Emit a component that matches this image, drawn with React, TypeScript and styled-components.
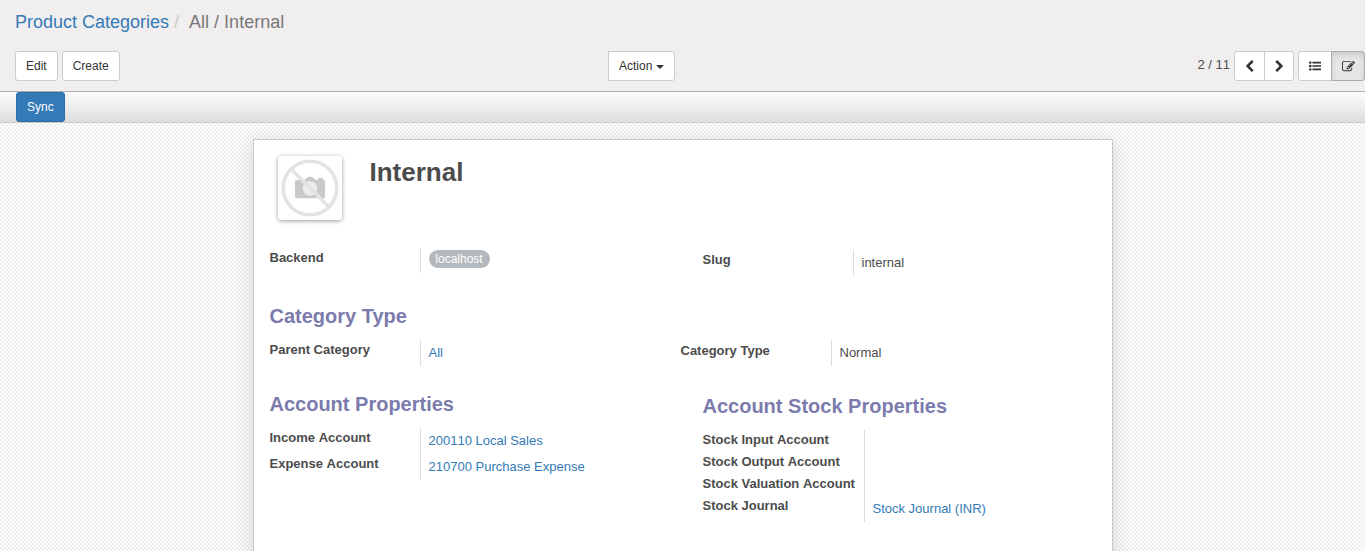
import React from 'react';
import styled, { createGlobalStyle, css } from 'styled-components';

const GlobalStyle = createGlobalStyle`
  *, *::before, *::after { box-sizing: border-box; }
  html, body { margin: 0; height: 100%; overflow: hidden; }
  body {
    font-family: "Liberation Sans", Arial, sans-serif;
    font-size: 13px;
    line-height: 18px;
    color: #4c4c4c;
    background: #fff;
  }
  button { font-family: inherit; margin: 0; }
`;

const Page = styled.div`
  display: flex;
  flex-direction: column;
  height: 551px;
  overflow: hidden;
`;

const ControlPanel = styled.header`
  flex: none;
  height: 92px;
  background: #f0eeee;
  border-bottom: 1px solid #afafb6;
  padding: 9px 0 0 15px;
`;

const Breadcrumb = styled.nav`
  display: flex;
  height: 42px;
  font-size: 18px;
  line-height: 26px;
  color: #777;
  white-space: pre;
`;

const Crumb = styled.a`
  color: #337ab7;
`;

const Separator = styled.span`
  color: #ccc;
  padding: 0 10px 0 5px;
`;

const Toolbar = styled.div`
  display: grid;
  grid-template-columns: 593px 1fr auto;
  align-items: start;
`;

const ButtonRow = styled.div`
  display: flex;
  gap: 4px;
`;

const Button = styled.button<{ $primary?: boolean; $squareLeft?: boolean }>`
  display: inline-flex;
  align-items: center;
  height: 30px;
  padding: 0 10px;
  font-size: 12px;
  line-height: 18px;
  color: ${p => (p.$primary ? '#fff' : '#333')};
  background: ${p => (p.$primary ? '#337ab7' : '#fff')};
  border: 1px solid ${p => (p.$primary ? '#2e6da4' : '#ccc')};
  border-radius: ${p => (p.$squareLeft ? '0 3px 3px 0' : '3px')};
`;

const Caret = styled.span`
  margin: 2px 0 0 4px;
  border-top: 4px solid #333;
  border-left: 4px solid transparent;
  border-right: 4px solid transparent;
`;

const PagerArea = styled.div`
  display: flex;
  gap: 4px;
`;

const PagerText = styled.span`
  line-height: 28px;
  font-kerning: none;
`;

const ButtonGroup = styled.div`
  display: flex;
`;

const IconButton = styled.button<{ $width: number; $active?: boolean }>`
  display: flex;
  align-items: center;
  justify-content: center;
  width: ${p => p.$width}px;
  height: 30px;
  padding: 0;
  color: #333;
  background: #fff;
  border: 1px solid #ccc;
  &:first-child { border-radius: 3px 0 0 3px; }
  &:last-child { border-radius: 0 3px 3px 0; margin-left: -1px; }
  ${p => p.$active && css`
    background: #e6e6e6;
    border-color: #adadad;
    box-shadow: inset 0 3px 5px rgba(0, 0, 0, 0.125);
  `}
`;

const StatusBar = styled.div`
  flex: none;
  height: 31px;
  padding-left: 16px;
  border-bottom: 1px solid #cacaca;
  background: linear-gradient(to bottom, #fcfcfc, #dedede);
`;

const Canvas = styled.main`
  flex: 1;
  padding-top: 16px;
  background: repeating-conic-gradient(#fff 0 25%, #eee 0 50%) 0 0 / 4px 4px;
`;

const Sheet = styled.section`
  width: 860px;
  height: 500px;
  margin-left: 253px;
  padding: 16px 15.5px;
  background: #fff;
  border: 1px solid #c8c8d3;
  box-shadow: 0 4px 20px rgba(0, 0, 0, 0.15);
`;

const SheetHeader = styled.div`
  display: flex;
  gap: 27.5px;
  height: 92px;
  padding-left: 8.5px;
`;

const Avatar = styled.div`
  width: 64px;
  height: 64px;
  border-radius: 3px;
  background: #fff;
  box-shadow: 0 1px 4px rgba(0, 0, 0, 0.4);
`;

const Title = styled.h1`
  margin: 0;
  font-size: 26px;
  line-height: 32px;
`;

const Section = styled.div<{ $height: number; $split?: number }>`
  display: grid;
  grid-template-columns: ${p => p.$split ?? 433}px 1fr;
  align-items: start;
  height: ${p => p.$height}px;
`;

const Column = styled.div<{ $offset?: number }>`
  padding-top: ${p => p.$offset ?? 0}px;
`;

const Heading = styled.h2`
  margin: 0;
  height: 36px;
  font-size: 20px;
  line-height: 24px;
  color: #7c7bad;
`;

const Field = styled.div<{ $label?: number; $height?: number }>`
  display: grid;
  grid-template-columns: ${p => p.$label ?? 150}px 1fr;
  height: ${p => p.$height ?? 26}px;
`;

const Label = styled.label<{ $shift?: number }>`
  font-weight: bold;
  white-space: nowrap;
  padding-top: ${p => p.$shift ?? 1}px;
`;

const Value = styled.div<{ $link?: boolean; $top?: number }>`
  padding: ${p => p.$top ?? 4}px 0 0 8px;
  border-left: 1px solid #ddd;
  color: ${p => (p.$link ? '#337ab7' : 'inherit')};
`;

const Unkerned = styled.span`
  font-kerning: none;
`;

const Tag = styled.span`
  display: block;
  width: 61px;
  height: 18px;
  border-radius: 9px;
  background: #b4b9bd;
  color: #fff;
  font-size: 12px;
  line-height: 18px;
  text-align: center;
`;

const ICONS = {
  left: 'M1427 301l-531 531 531 531q19 19 19 45t-19 45l-166 166q-19 19-45 19t-45-19l-742-742q-19-19-19-45t19-45l742-742q19-19 45-19t45 19l166 166q19 19 19 45t-19 45z',
  right: 'M1363 877l-742 742q-19 19-45 19t-45-19l-166-166q-19-19-19-45t19-45l531-531-531-531q-19-19-19-45t19-45l166-166q19-19 45-19t45 19l742 742q19 19 19 45t-19 45z',
  list: 'M384 1408q0 80-56 136t-136 56-136-56-56-136 56-136 136-56 136 56 56 136zm0-512q0 80-56 136t-136 56-136-56-56-136 56-136 136-56 136 56 56 136zm1408 416v192q0 13-9.500 22.500t-22.500 9.500h-1216q-13 0-22.500-9.500t-9.500-22.500v-192q0-13 9.500-22.500t22.500-9.500h1216q13 0 22.500 9.500t9.500 22.500zm-1408-928q0 80-56 136t-136 56-136-56-56-136 56-136 136-56 136 56 56 136zm1408 416v192q0 13-9.500 22.500t-22.500 9.500h-1216q-13 0-22.500-9.500t-9.500-22.500v-192q0-13 9.500-22.500t22.500-9.500h1216q13 0 22.500 9.500t9.500 22.500zm0-512v192q0 13-9.500 22.500t-22.500 9.500h-1216q-13 0-22.500-9.500t-9.500-22.500v-192q0-13 9.500-22.500t22.500-9.500h1216q13 0 22.500 9.500t9.500 22.500z',
  edit: 'M888 1184l116-116-152-152-116 116v56h96v96h56zm440-720q-16-16-33 1l-350 350q-17 17-1 33t33-1l350-350q17-17 1-33zm80 594v190q0 119-84.500 203.500t-203.500 84.500h-832q-119 0-203.500-84.500t-84.500-203.500v-832q0-119 84.500-203.500t203.500-84.500h832q63 0 117 25 15 7 18 23 3 17-9 29l-49 49q-14 14-32 8-23-6-45-6h-832q-66 0-113 47t-47 113v832q0 66 47 113t113 47h832q66 0 113-47t47-113v-126q0-13 9-22l64-64q15-15 35-7t20 29zm-96-738l288 288-672 672h-288v-288zm444 132l-92 92-288-288 92-92q28-28 68-28t68 28l152 152q28 28 28 68t-28 68z',
};

const Icon = ({ name, size = 12 }: { name: keyof typeof ICONS; size?: number }) => (
  <svg width={size} height={size} viewBox="0 0 1792 1792" fill="currentColor">
    <path d={ICONS[name]} />
  </svg>
);

const NoPhoto = () => (
  <svg width="64" height="64" viewBox="0 0 64 64" display="block">
    <path d="M17 25.500q0-1.500 1.500-1.500h7q1.500 0 3-2 3.500-3 7 0 1.500 2 3 2H40v-2h5v2h1q1 0 1 1.500V41q0 1.200-1.200 1.200H18.200Q17 42.200 17 41z" fill="#c9c9c9" />
    <circle cx="32" cy="32.500" r="7.300" fill="#ececec" />
    <circle cx="32" cy="32" r="26.800" fill="none" stroke="#e3e3e3" strokeWidth="3.600" />
    <path d="M13 13l38 38" stroke="#e3e3e3" strokeWidth="3.800" />
  </svg>
);

export default function App() {
  return (
    <Page>
      <GlobalStyle />
      <ControlPanel>
        <Breadcrumb>
          <Crumb>Product Categories</Crumb>
          <Separator>/</Separator>
          <span>All / Internal</span>
        </Breadcrumb>
        <Toolbar>
          <ButtonRow>
            <Button>Edit</Button>
            <Button>Create</Button>
          </ButtonRow>
          <div>
            <Button $squareLeft>Action<Caret /></Button>
          </div>
          <PagerArea>
            <PagerText>2 / 11</PagerText>
            <ButtonGroup>
              <IconButton $width={31}><Icon name="left" size={13} /></IconButton>
              <IconButton $width={30}><Icon name="right" size={13} /></IconButton>
            </ButtonGroup>
            <ButtonGroup>
              <IconButton $width={34}><Icon name="list" /></IconButton>
              <IconButton $width={34} $active><Icon name="edit" size={13} /></IconButton>
            </ButtonGroup>
          </PagerArea>
        </Toolbar>
      </ControlPanel>
      <StatusBar>
        <Button $primary>Sync</Button>
      </StatusBar>
      <Canvas>
        <Sheet>
          <SheetHeader>
            <Avatar><NoPhoto /></Avatar>
            <Title>Internal</Title>
          </SheetHeader>
          <Section $height={56}>
            <Column>
              <Field $height={25}>
                <Label>Backend</Label>
                <Value $top={2}><Tag>localhost</Tag></Value>
              </Field>
            </Column>
            <Column $offset={2}>
              <Field><Label>Slug</Label><Value>internal</Value></Field>
            </Column>
          </Section>
          <Heading>Category Type</Heading>
          <Section $height={52} $split={411}>
            <Column>
              <Field><Label>Parent Category</Label><Value $link>All</Value></Field>
            </Column>
            <Column>
              <Field><Label $shift={2}>Category Type</Label><Value>Normal</Value></Field>
            </Column>
          </Section>
          <Section $height={140}>
            <Column>
              <Heading>Account Properties</Heading>
              <Field><Label>Income<Unkerned> Account</Unkerned></Label><Value $link><Unkerned>200110 Local Sales</Unkerned></Value></Field>
              <Field><Label>Expense<Unkerned> Account</Unkerned></Label><Value $link>210700 Purchase Expense</Value></Field>
            </Column>
            <Column $offset={2}>
              <Heading>Account Stock Properties</Heading>
              <Field $label={161} $height={22}><Label>Stock Input<Unkerned> Account</Unkerned></Label><Value /></Field>
              <Field $label={161} $height={22}><Label>Stock Output<Unkerned> Account</Unkerned></Label><Value /></Field>
              <Field $label={161} $height={22}><Label>Stock Valuation<Unkerned> Account</Unkerned></Label><Value /></Field>
              <Field $label={161}><Label>Stock Journal</Label><Value $link>Stock Journal (INR)</Value></Field>
            </Column>
          </Section>
        </Sheet>
      </Canvas>
    </Page>
  );
}
